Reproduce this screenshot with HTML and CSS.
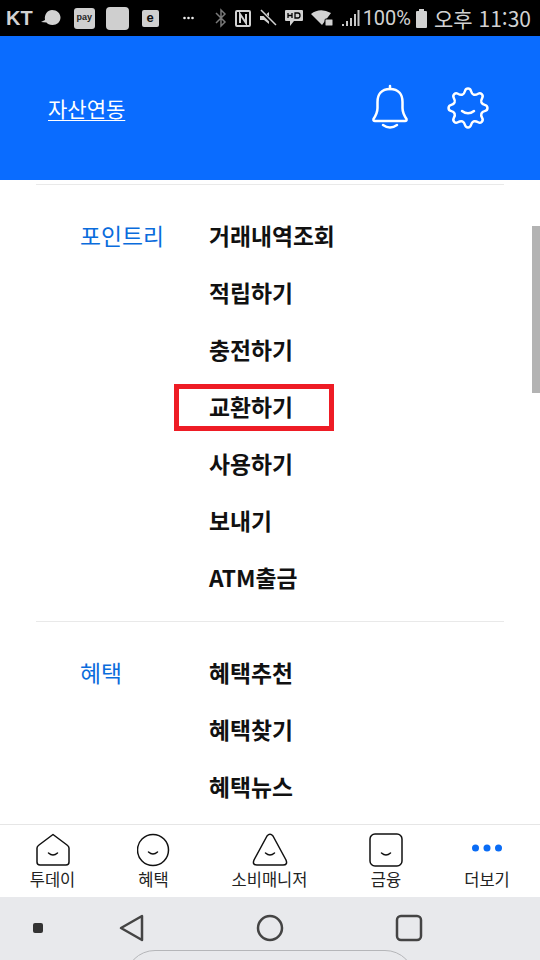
FILE: index.html
```html
<!DOCTYPE html>
<html lang="ko">
<head>
    <meta charset="UTF-8">
    <meta name="viewport" content="width=device-width, initial-scale=1.0">
    <title>자산연동</title>
    <link rel="stylesheet" href="styles.css">
</head>
<body>
    <div class="status-bar">
        <div class="status-left">
            <span class="carrier">KT</span>
            <svg class="s-talk" width="20" height="18" viewBox="0 0 20 18"><path d="M0 13 L4 11 C3 5 7 1 11 1 C16 1 19.500 4.500 19.500 8.500 C19.500 13 16 16 11.500 16 C8.500 16 6.500 15 5.500 13.500 Z" fill="#d2d2d2"/></svg>
            <span class="s-pay">pay</span>
            <span class="s-square"></span>
            <span class="s-e">e</span>
            <svg class="s-dots" width="11" height="4" viewBox="0 0 11 4" fill="#eee"><circle cx="1.500" cy="2" r="1.300"/><circle cx="5.500" cy="2" r="1.300"/><circle cx="9.500" cy="2" r="1.300"/></svg>
        </div>
        <div class="status-right">
            <svg width="12" height="20" viewBox="0 0 12 20" fill="none" stroke="#7a7a7a" stroke-width="1.500"><path d="M1 5 L10 14 L6 18 V2 L10 6 L1 15"/></svg>
            <svg width="18" height="19" viewBox="0 0 18 19" fill="none" stroke="#d2d2d2" stroke-width="2"><rect x="2" y="2" width="14" height="15" rx="1"/><path d="M6 14 V5 L12 14 V5"/></svg>
            <svg width="18" height="18" viewBox="0 0 18 18"><path d="M1 7 H5 L10 3 V15 L5 11 H1 Z" fill="#d2d2d2"/><path d="M1 1 L17 17" stroke="#000" stroke-width="3.500"/><path d="M2 1 L17 16" stroke="#d2d2d2" stroke-width="1.500"/></svg>
            <svg width="20" height="20" viewBox="0 0 20 20"><path d="M2 2 H18 A1 1 0 0 1 19 3 V12 A1 1 0 0 1 18 13 H10 L6 18 V13 H2 A1 1 0 0 1 1 12 V3 A1 1 0 0 1 2 2 Z" fill="#d2d2d2"/><path d="M4 5 V10 M8 5 V10 M4 7.500 H8 M11 5 V10 H14 Q16 10 16 7.500 Q16 5 14 5 Z" fill="none" stroke="#000" stroke-width="1.300"/></svg>
            <svg width="24" height="18" viewBox="0 0 24 18"><path d="M0 5 Q9 -2 20 4 L11 16 Z" fill="#d2d2d2"/><rect x="14" y="10" width="8" height="7" rx="1" fill="#d2d2d2" stroke="#000"/></svg>
            <svg class="s-signal" width="18" height="18" viewBox="0 0 18 18" fill="#c8c8c8"><rect x="0" y="15" width="2" height="2"/><rect x="4" y="12" width="2" height="5"/><rect x="8" y="9" width="2" height="8"/><rect x="12" y="5" width="2" height="12"/><rect x="15.500" y="1" width="2" height="16"/></svg>
            <span class="s-text">100%</span>
            <svg width="11" height="19" viewBox="0 0 11 19" fill="#d2d2d2"><rect x="3" y="0" width="5" height="3"/><rect x="0" y="2" width="11" height="17" rx="1"/></svg>
            <span class="s-text s-time">오후 11:30</span>
        </div>
    </div>

    <div class="header">
        <a class="header-link">자산연동</a>
        <div class="header-icons">
            <svg width="38" height="48" viewBox="0 0 38 48" fill="none" stroke="#fff" stroke-width="2.500" stroke-linecap="round" stroke-linejoin="round">
                <path d="M19 2 V5"/>
                <path d="M19 5 C10 5 6.500 11 6.500 18 V24 C6.500 29 4.500 32 2.500 35 Q2 37 4 37 H34 Q36 37 35.500 35 C33.500 32 31.500 29 31.500 24 V18 C31.500 11 28 5 19 5 Z"/>
                <path d="M12 41 Q19 46 26 41"/>
            </svg>
            <svg width="44" height="44" viewBox="0 0 44 44" fill="none" stroke="#fff" stroke-width="2.500" stroke-linecap="round" stroke-linejoin="round">
                <path d="M19.110 4.740 A3 3 0 0 1 24.890 4.740 Q26.590 10.910 32.160 7.750 A3 3 0 0 1 36.250 11.840 Q33.090 17.410 39.260 19.110 A3 3 0 0 1 39.260 24.890 Q33.090 26.590 36.250 32.160 A3 3 0 0 1 32.160 36.250 Q26.590 33.090 24.890 39.260 A3 3 0 0 1 19.110 39.260 Q17.410 33.090 11.840 36.250 A3 3 0 0 1 7.750 32.160 Q10.910 26.590 4.740 24.890 A3 3 0 0 1 4.740 19.110 Q10.910 17.410 7.750 11.840 A3 3 0 0 1 11.840 7.750 Q17.410 10.910 19.110 4.740 Z"/>
                <path d="M16 25 Q22 29.500 28 25"/>
            </svg>
        </div>
    </div>

    <div class="content">
        <div class="section first">
            <div class="section-title">포인트리</div>
            <ul class="menu">
                <li>거래내역조회</li>
                <li>적립하기</li>
                <li>충전하기</li>
                <li class="marked">교환하기<span class="red-box"></span></li>
                <li>사용하기</li>
                <li>보내기</li>
                <li>ATM출금</li>
            </ul>
        </div>
        <div class="section">
            <div class="section-title">혜택</div>
            <ul class="menu">
                <li>혜택추천</li>
                <li>혜택찾기</li>
                <li>혜택뉴스</li>
            </ul>
        </div>
        <div class="scrollbar"></div>
    </div>

    <div class="tabbar">
        <div class="tab">
            <svg width="34" height="34" viewBox="0 0 34 34" fill="none" stroke="#111" stroke-width="1.500" stroke-linecap="round" stroke-linejoin="round"><path d="M17 1.500 L31 12 Q33 13.500 33 15 V29 Q33 32 30 32 H4 Q1 32 1 29 V15 Q1 13.500 3 12 Z"/><path d="M12.500 20 Q17 24 21.500 20"/></svg>
            <span>투데이</span>
        </div>
        <div class="tab">
            <svg width="34" height="34" viewBox="0 0 34 34" fill="none" stroke="#111" stroke-width="1.500" stroke-linecap="round"><circle cx="16" cy="17" r="15.500"/><path d="M11.500 19 Q16 23 20.500 19"/></svg>
            <span>혜택</span>
        </div>
        <div class="tab">
            <svg width="36" height="34" viewBox="0 0 36 34" fill="none" stroke="#111" stroke-width="1.500" stroke-linecap="round" stroke-linejoin="round"><path d="M15 3 Q18 -0.500 21 3 L34 27 Q36 32 31 32 H5 Q0 32 2 27 Z"/><path d="M13.500 20 Q18 24 22.500 20"/></svg>
            <span>소비매니저</span>
        </div>
        <div class="tab">
            <svg width="34" height="34" viewBox="0 0 34 34" fill="none" stroke="#111" stroke-width="1.500" stroke-linecap="round"><rect x="1" y="1" width="32" height="32" rx="5"/><path d="M12.500 20 Q17 24 21.500 20"/></svg>
            <span>금융</span>
        </div>
        <div class="tab">
            <svg width="34" height="34" viewBox="0 0 34 34" fill="#0a6cf5"><circle cx="5.500" cy="15" r="3.500"/><circle cx="17" cy="15" r="3.500"/><circle cx="28.500" cy="15" r="3.500"/></svg>
            <span>더보기</span>
        </div>
    </div>

    <div class="nav-bar">
        <span class="nav-dot"></span>
        <svg width="26" height="28" viewBox="0 0 26 28" fill="none" stroke="#444" stroke-width="2.500" stroke-linejoin="round"><path d="M23 2 V26 L2 14 Z"/></svg>
        <svg width="28" height="28" viewBox="0 0 28 28" fill="none" stroke="#444" stroke-width="2.500"><circle cx="14" cy="14" r="12"/></svg>
        <svg width="28" height="28" viewBox="0 0 28 28" fill="none" stroke="#444" stroke-width="2.500"><rect x="2" y="2" width="24" height="24" rx="4"/></svg>
        <div class="home-pill"></div>
    </div>
</body>
</html>
```

FILE: styles.css
```css
/* Basic Reset */
* {
    margin: 0;
    padding: 0;
    box-sizing: border-box;
}

html, body {
    height: 960px;
    overflow: hidden;
}

body {
    width: 540px;
    font-family: "Noto Sans CJK KR", "Noto Sans", sans-serif;
    background-color: #fff;
    display: flex;
    flex-direction: column;
}

/* Status Bar */
.status-bar {
    height: 36px;
    background-color: #000;
    color: #d2d2d2;
    display: flex;
    justify-content: space-between;
    align-items: center;
    padding: 0 9px 0 6px;
}

.status-left,
.status-right {
    display: flex;
    align-items: center;
}

.carrier {
    font-family: "Liberation Sans", sans-serif;
    font-size: 20px;
    font-weight: bold;
    margin-right: 8px;
}

.s-talk {
    margin-right: 13px;
}

.s-pay {
    width: 21px;
    height: 21px;
    background-color: #cfcfcf;
    color: #222;
    border-radius: 3px;
    font-family: "Liberation Sans", sans-serif;
    font-size: 9px;
    font-weight: bold;
    line-height: 19px;
    text-align: center;
    margin-right: 11px;
}

.s-square {
    width: 23px;
    height: 23px;
    background-color: #cfcfcf;
    border-radius: 4px;
    margin-right: 13px;
}

.s-e {
    width: 17px;
    height: 17px;
    background-color: #cfcfcf;
    color: #111;
    border-radius: 2px;
    font-family: "Liberation Sans", sans-serif;
    font-size: 13px;
    font-weight: bold;
    line-height: 15px;
    text-align: center;
    margin-right: 24px;
}

.status-right {
    gap: 3px;
}

.status-right svg {
    margin-right: 4px;
}

.status-right .s-signal {
    margin-right: 0;
}

.s-text {
    font-family: "Roboto", sans-serif;
    font-size: 20px;
    margin-right: 2px;
}

.s-time {
    font-family: "Noto Sans CJK KR", sans-serif;
    font-size: 21px;
    margin-right: 0;
}

/* Header */
.header {
    height: 144px;
    background-color: #0a6cff;
    display: flex;
    justify-content: space-between;
    align-items: center;
    padding: 0 50px 0 48px;
}

.header-link {
    color: #fff;
    font-size: 21px;
    text-decoration: underline;
    text-underline-offset: 3px;
    text-decoration-thickness: 1px;
}

.header-icons {
    display: flex;
    align-items: center;
    gap: 37px;
}

/* Menu List */
.content {
    flex: 1;
    position: relative;
    overflow: hidden;
    padding: 4px 36px 0;
}

.section {
    display: flex;
    border-top: 1px solid #e9e9e9;
    padding: 22px 0 0 44px;
    height: 437px;
}

.section-title {
    width: 129px;
    color: #0a6cdc;
    font-size: 22.800px;
    line-height: 57px;
    height: 57px;
}

.menu {
    list-style: none;
}

.menu li {
    position: relative;
    height: 57px;
    line-height: 57px;
    font-size: 22.800px;
    font-weight: bold;
    color: #111;
}

.red-box {
    position: absolute;
    left: -35px;
    top: 6px;
    width: 160px;
    height: 47px;
    border: 5px solid #ee1c25;
}

.scrollbar {
    position: absolute;
    right: 0;
    top: 46px;
    width: 8px;
    height: 167px;
    background-color: #b3b3b3;
}

/* Bottom Tabs */
.tabbar {
    height: 73px;
    border-top: 1px solid #e6e6e6;
    background-color: #fff;
    display: flex;
    padding-top: 8px;
}

.tab {
    display: flex;
    flex-direction: column;
    align-items: center;
    font-size: 16.500px;
    color: #222;
    line-height: 22px;
    gap: 1px;
}

.tab:nth-child(1) { width: 105px; }
.tab:nth-child(2) { width: 97px; }
.tab:nth-child(3) { width: 135px; }
.tab:nth-child(4) { width: 98px; }
.tab:nth-child(5) { width: 104px; }

/* Android Nav */
.nav-bar {
    height: 63px;
    background-color: #e8e9ec;
    position: relative;
    overflow: hidden;
    display: flex;
    align-items: flex-start;
    padding: 17px 0 0 33px;
}

.nav-dot {
    width: 10px;
    height: 10px;
    margin-top: 9px;
    margin-right: 76px;
    background-color: #333;
    border-radius: 2px;
}

.nav-bar svg {
    margin-right: 111px;
}

.home-pill {
    position: absolute;
    left: 125px;
    top: 53px;
    width: 290px;
    height: 60px;
    border: 1px solid #b5b6b9;
    border-radius: 30px;
}
```
